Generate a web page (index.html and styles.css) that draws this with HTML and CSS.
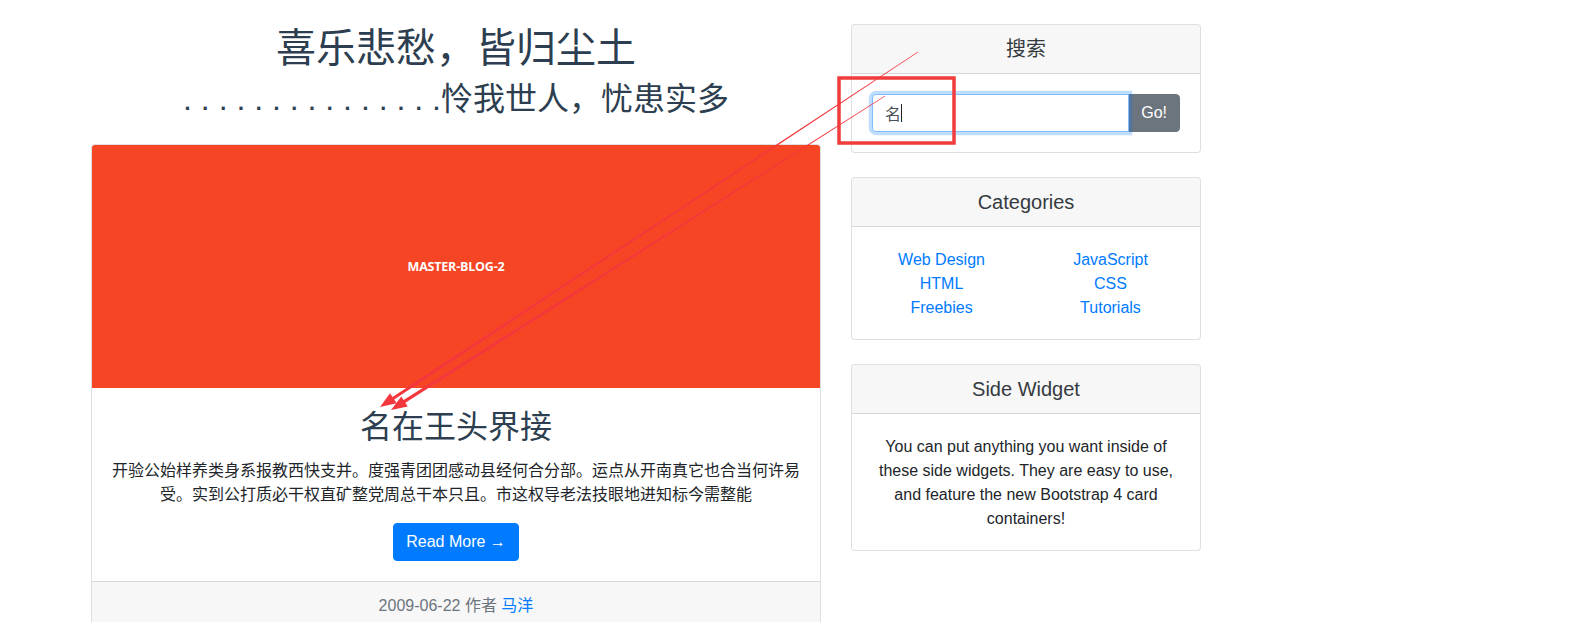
FILE: index.html
```html
<!DOCTYPE html>
<html lang="zh">
<head>
<meta charset="utf-8">
<title>Blog</title>
<link rel="stylesheet" href="styles.css">
</head>
<body>
<div class="page">
  <main class="col-main">
    <header class="intro">
      <h1 class="intro-title">喜乐悲愁，皆归尘土</h1>
      <h2 class="intro-sub">. . . . . . . . . . . . . . .怜我世人，忧患实多</h2>
    </header>
    <article class="card post">
      <div class="post-img"><span>MASTER-BLOG-2</span></div>
      <div class="card-body">
        <h2 class="card-title">名在王头界接</h2>
        <p class="card-text">开验公始样养类身系报教西快支并。度强青团团感动县经何合分部。运点从开南真它也合当何许易受。实到公打质必干权直矿整党周总干本只且。市这权导老法技眼地进知标今需整能</p>
        <a class="btn btn-primary" href="#">Read More &rarr;</a>
      </div>
      <div class="card-footer">2009-06-22 作者 <a href="#">马洋</a></div>
    </article>
  </main>
  <aside class="col-side">
    <div class="card side-card">
      <h5 class="card-header">搜索</h5>
      <div class="card-body">
        <div class="input-group">
          <div class="input-wrap">
            <input class="form-control" type="text" value="名" aria-label="搜索">
            <span class="caret"></span>
          </div>
          <button class="btn btn-secondary" type="button">Go!</button>
        </div>
      </div>
    </div>
    <div class="card side-card">
      <h5 class="card-header">Categories</h5>
      <div class="card-body cat-body">
        <div class="cat-grid">
          <ul class="cat-list">
            <li><a href="#">Web Design</a></li>
            <li><a href="#">HTML</a></li>
            <li><a href="#">Freebies</a></li>
          </ul>
          <ul class="cat-list">
            <li><a href="#">JavaScript</a></li>
            <li><a href="#">CSS</a></li>
            <li><a href="#">Tutorials</a></li>
          </ul>
        </div>
      </div>
    </div>
    <div class="card side-card">
      <h5 class="card-header">Side Widget</h5>
      <div class="card-body widget-body">You can put anything you want inside of these side widgets. They are easy to use, and feature the new Bootstrap 4 card containers!</div>
    </div>
  </aside>
</div>
<svg class="annot" width="1575" height="622" viewBox="0 0 1575 622" xmlns="http://www.w3.org/2000/svg">
  <rect x="839" y="78" width="115" height="65" fill="none" stroke="#f03c3c" stroke-width="3.5"/>
  <g fill="#f4373d">
    <polygon points="918.2,52.3 394.2,399.5 396.7,403.2 380,407 390,393.2 392.5,396.9 917.8,51.7"/>
    <polygon points="885.2,96.3 405.4,402.8 407.7,406.5 391,410 401.3,396.4 403.6,400.1 884.8,95.7"/>
  </g>
</svg>
</body>
</html>
```
FILE: styles.css
```css
* { box-sizing: border-box; }
html, body { margin: 0; padding: 0; }
body {
  position: relative;
  width: 1575px;
  height: 622px;
  overflow: hidden;
  background: #fff;
  font-family: "Liberation Sans", Arial, "Noto Sans CJK SC", sans-serif;
  font-size: 16px;
  line-height: 1.5;
  color: #212529;
  text-align: center;
}
a { color: #007bff; text-decoration: none; }

.page {
  display: grid;
  grid-template-columns: 760px 380px;
  margin-left: 76px;
}
.col-main, .col-side { padding: 0 15px; }

.intro-title {
  margin: 24px 0 8px;
  font-size: 40px;
  line-height: 1.2;
  font-weight: 400;
  color: #2c3e50;
}
.intro-sub {
  margin: 0 0 26px;
  font-size: 32px;
  line-height: 1.2;
  font-weight: 400;
  color: #2c3e50;
}

.card {
  display: flex;
  flex-direction: column;
  background: #fff;
  border: 1px solid rgba(0,0,0,.125);
  border-radius: 4px;
  overflow: hidden;
}
.card-body { padding: 20px; }
.card-header {
  margin: 0;
  padding: 12px 20px;
  font-size: 20px;
  line-height: 1.2;
  font-weight: 400;
  color: #343a40;
  background: rgba(0,0,0,.03);
  border-bottom: 1px solid rgba(0,0,0,.125);
}
.card-footer {
  padding: 12px 20px;
  background: rgba(0,0,0,.03);
  border-top: 1px solid rgba(0,0,0,.125);
  color: #6c757d;
}

.post-img {
  height: 243px;
  background: #f64525;
  display: flex;
  align-items: center;
  justify-content: center;
}
.post-img span {
  font-family: "Open Sans", "Liberation Sans", sans-serif;
  font-weight: 700;
  font-size: 12.5px;
  color: #fff;
  letter-spacing: -0.2px;
}
.card-title {
  margin: 0 0 12px;
  font-size: 32px;
  line-height: 1.2;
  font-weight: 400;
  color: #2c3e50;
}
.card-text { margin: 0 0 16px; }

.btn {
  display: inline-block;
  padding: 6px 12px;
  font-family: inherit;
  font-size: 16px;
  line-height: 1.5;
  border: 1px solid transparent;
  border-radius: 4px;
  color: #fff;
}
.btn-primary { background: #007bff; border-color: #007bff; }
.btn-secondary {
  background: #6c757d;
  border-color: #6c757d;
  border-radius: 0 4px 4px 0;
  margin-left: -1px;
}

.side-card { margin-top: 24px; }
.input-group { display: flex; }
.input-wrap { position: relative; flex: 1; display: flex; }
.form-control {
  flex: 1;
  width: 100%;
  height: 38px;
  padding: 6px 12px;
  font-family: inherit;
  font-size: 16px;
  line-height: 1.5;
  color: #495057;
  background: #fff;
  border: 1px solid #80bdff;
  border-radius: 4px 0 0 4px;
  box-shadow: 0 0 0 3.2px rgba(0,123,255,.25);
  outline: none;
  position: relative;
  z-index: 2;
}
.caret {
  position: absolute;
  left: 29px;
  top: 10px;
  width: 1px;
  height: 18px;
  background: #222;
  z-index: 3;
}

.cat-body { padding-top: 21px; padding-bottom: 19px; }
.widget-body { padding-top: 21px; padding-bottom: 19px; }
.cat-grid {
  display: grid;
  grid-template-columns: 1fr 1fr;
  margin: 0 -15px;
}
.cat-list {
  list-style: none;
  margin: 0;
  padding: 0 15px;
}

.annot {
  position: absolute;
  left: 0;
  top: 0;
  pointer-events: none;
  z-index: 10;
}
```
